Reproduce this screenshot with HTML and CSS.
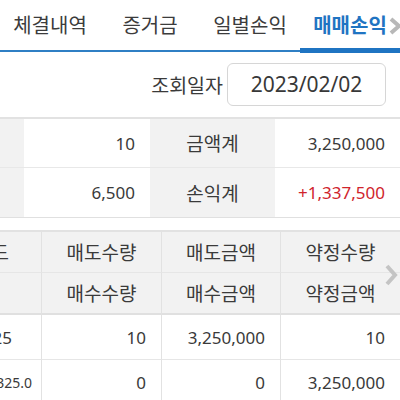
FILE: index.html
```html
<!DOCTYPE html>
<html lang="ko">
<head>
<meta charset="utf-8">
<link rel="stylesheet" href="styles.css">
</head>
<body>
<div class="tabs">
  <div class="tab">체결내역</div>
  <div class="tab">증거금</div>
  <div class="tab">일별손익</div>
  <div class="tab active">매매손익</div>
  <svg class="tab-more" width="14" height="18" viewBox="0 0 14 18"><path d="M3 2 L11 9 L3 16" fill="none" stroke="#b8b8b8" stroke-width="4" stroke-linejoin="miter"/></svg>
</div>
<div class="query">
  <span class="query-label">조회일자</span>
  <div class="date-box">2023/02/02</div>
</div>
<div class="summary-wrap">
  <div class="summary">
    <div class="s-label"></div>
    <div class="s-value">10</div>
    <div class="s-label">금액계</div>
    <div class="s-value">3,250,000</div>
    <div class="s-label"></div>
    <div class="s-value">6,500</div>
    <div class="s-label">손익계</div>
    <div class="s-value red">+1,337,500</div>
  </div>
</div>
<div class="grid-wrap">
  <div class="grid">
    <div class="h first pad-h">코드</div>
    <div class="h">매도수량</div>
    <div class="h">매도금액</div>
    <div class="h">약정수량</div>
    <div class="h h2 first"></div>
    <div class="h h2">매수수량</div>
    <div class="h h2">매수금액</div>
    <div class="h h2">약정금액</div>
    <div class="d first pad-d1">325</div>
    <div class="d">10</div>
    <div class="d">3,250,000</div>
    <div class="d">10</div>
    <div class="d first pad-d2 small">325.0</div>
    <div class="d">0</div>
    <div class="d">0</div>
    <div class="d">3,250,000</div>
  </div>
  <svg class="grid-more" width="14" height="22" viewBox="0 0 14 22"><path d="M3 2 L11 11 L3 20" fill="none" stroke="#c4c4c4" stroke-width="4"/></svg>
</div>
</body>
</html>
```
FILE: styles.css
```css
* { box-sizing: border-box; }
html, body {
  margin: 0;
  padding: 0;
  background: #fff;
  font-family: "Noto Sans", "Noto Sans CJK KR", sans-serif;
  color: #3a3a3a;
  width: 400px;
  overflow: hidden;
}
.tabs {
  position: relative;
  display: flex;
  height: 52px;
  border-bottom: 2px solid #2f7fc4;
}
.tab {
  width: 100px;
  flex: none;
  display: flex;
  align-items: center;
  justify-content: center;
  font-size: 20px;
  color: #3c3c3c;
  padding-bottom: 2px;
}
.tab.active {
  position: relative;
  color: #1f74c2;
  font-weight: 700;
}
.tab.active::after {
  content: "";
  position: absolute;
  left: 0;
  right: 0;
  bottom: -3px;
  height: 5px;
  background: #1f74c2;
}
.tab-more {
  position: absolute;
  right: -2px;
  top: 17px;
}
.query {
  display: flex;
  align-items: center;
  justify-content: flex-end;
  height: 67px;
  padding-right: 14px;
  border-bottom: 2px solid #e2e2e2;
}
.query-label {
  font-size: 19.5px;
  margin-right: 4px;
}
.date-box {
  width: 159px;
  height: 43px;
  border: 1px solid #d6d6d6;
  border-radius: 6px;
  display: flex;
  align-items: center;
  justify-content: center;
  font-size: 21px;
  color: #383838;
  padding-bottom: 1px;
}
.summary-wrap {
  overflow: hidden;
  border-bottom: 1px solid #e0e0e0;
}
.summary {
  display: grid;
  grid-template-columns: 125px 126px 125px 125px;
  grid-auto-rows: 49px;
  margin-left: -101px;
}
.s-label, .s-value {
  display: flex;
  align-items: center;
  font-size: 17px;
  border-bottom: 1px solid #e8e8e8;
}
.s-label {
  background: #f2f2f2;
  justify-content: center;
  font-size: 19px;
}
.s-value {
  justify-content: flex-end;
  padding-right: 15px;
}
.summary > :nth-last-child(-n+4) { border-bottom: none; }
.red { color: #d0242c; }
.grid-wrap {
  position: relative;
  margin-top: 12px;
  border-top: 2px solid #e2e2e2;
  overflow: hidden;
}
.grid {
  display: grid;
  grid-template-columns: 42px 120px 119px 119px;
  grid-template-rows: 41px 42px 45px 45px;
}
.h, .d {
  display: flex;
  align-items: center;
  font-size: 17px;
  white-space: nowrap;
  border-right: 1px solid #e2e2e2;
  border-bottom: 1px solid #e6e6e6;
}
.grid > :nth-child(4n) { border-right: none; }
.h {
  background: #f2f2f2;
  justify-content: center;
  font-size: 19px;
}
.h2 { border-bottom: 2px solid #e0e0e0; }
.d {
  justify-content: flex-end;
  padding-right: 15px;
}
.first { justify-content: flex-end; overflow: hidden; }
.pad-h { padding-right: 32px; }
.pad-d1 { padding-right: 29px; }
.pad-d2 { padding-right: 9px; }
.small { font-size: 14px; }
.grid-more {
  position: absolute;
  right: 2px;
  top: 32px;
}
```
